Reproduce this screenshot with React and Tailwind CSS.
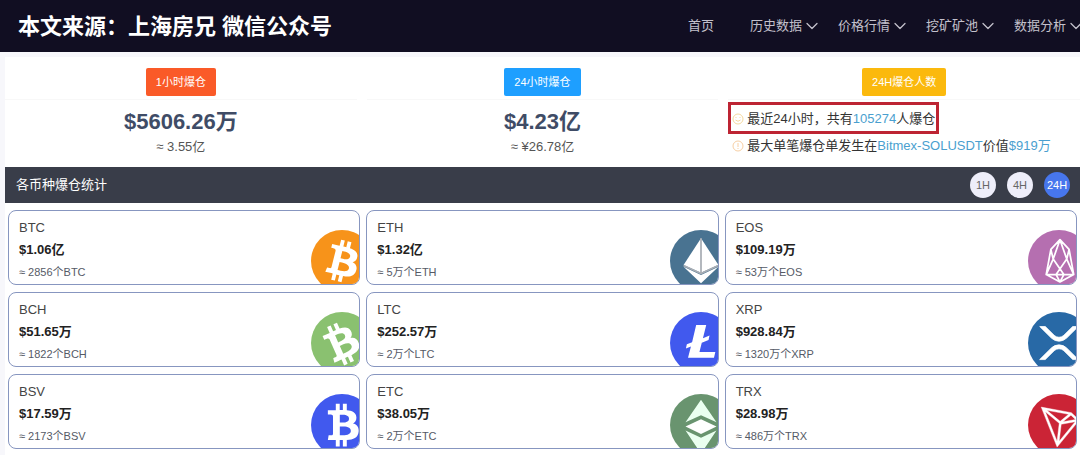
import React, { useState } from "react";
import { FiChevronDown } from "react-icons/fi";

const MENU = ["历史数据", "价格行情", "挖矿矿池", "数据分析"];

const COINS = [
    { name: "BTC", amount: "$1.06亿", count: "≈ 2856个BTC" },
    { name: "ETH", amount: "$1.32亿", count: "≈ 5万个ETH" },
    { name: "EOS", amount: "$109.19万", count: "≈ 53万个EOS" },
    { name: "BCH", amount: "$51.65万", count: "≈ 1822个BCH" },
    { name: "LTC", amount: "$252.57万", count: "≈ 2万个LTC" },
    { name: "XRP", amount: "$928.84万", count: "≈ 1320万个XRP" },
    { name: "BSV", amount: "$17.59万", count: "≈ 2173个BSV" },
    { name: "ETC", amount: "$38.05万", count: "≈ 2万个ETC" },
    { name: "TRX", amount: "$28.98万", count: "≈ 486万个TRX" },
];

const BITCOIN_SIGN =
    "M23.189 14.02c.314-2.096-1.283-3.223-3.465-3.975l.708-2.84-1.728-.43-.69 2.765c-.454-.114-.92-.22-1.385-.326l.695-2.783L15.596 6l-.708 2.839c-.376-.086-.746-.17-1.104-.26l.002-.009-2.384-.595-.46 1.846s1.283.294 1.256.312c.7.175.826.638.805 1.006l-.806 3.235c.048.012.11.03.18.057l-.183-.045-1.13 4.532c-.086.212-.303.531-.793.41.018.025-1.256-.313-1.256-.313l-.858 1.978 2.25.561c.418.105.828.215 1.231.318l-.715 2.872 1.727.43.708-2.84c.472.127.93.245 1.378.357l-.706 2.828 1.728.43.715-2.866c2.948.558 5.164.333 6.097-2.333.752-2.146-.037-3.385-1.588-4.192 1.13-.26 1.98-1.003 2.207-2.538zm-3.95 5.538c-.533 2.147-4.148.986-5.32.695l.95-3.805c1.172.293 4.929.872 4.37 3.11zm.535-5.569c-.487 1.953-3.495.96-4.47.717l.86-3.45c.975.243 4.118.696 3.61 2.733z";

const LOGOS = {
    BTC: {
        color: "#f7931a",
        mark: <path transform="translate(16 16) scale(1.1) translate(-16 -16)" d={BITCOIN_SIGN} />,
    },
    BCH: {
        color: "#8ac170",
        mark: <path transform="translate(16 16) rotate(-38) scale(1.12) translate(-16.5 -16)" d={BITCOIN_SIGN} />,
    },
    BSV: {
        color: "#4159ee",
        mark: <path transform="translate(16 16) rotate(-14) scale(1.14) translate(-16 -16)" d={BITCOIN_SIGN} />,
    },
    ETH: {
        color: "#497391",
        mark: (
            <>
                <path d="M16 4.3 7 18l9 4 9-4z" />
                <path d="m7 19 9 8.5L25 19l-9 4.2z" />
                <path d="M16 4.3V22M7 18.3l9 4.2 9-4.2" fill="none" stroke="#a9aeb5" strokeWidth="0.9" />
            </>
        ),
    },
    LTC: {
        color: "#4159ee",
        mark: <path d="M13.5 6.7h5.2L17 13.5l3.4-1.4-.5 2.3-3.5 1.5-1.2 4.8h8.2l-.7 2.9H9.3l1.5-5.8-2.6 1.1.5-2.2 2.7-1.100z" />,
    },
    ETC: {
        color: "#69946f",
        mark: (
            <>
                <path d="M16 3 8 14.6l8-3.6 8 3.6z" fill="#eafff0" />
                <path d="m16 13-8 3.8 8 3.8 8-3.8z" />
                <path d="m8 18.8 8 12 8-12-8 3.8z" fill="#eafff0" />
            </>
        ),
    },
    EOS: {
        color: "#b56fb0",
        mark: (
            <path
                d="M16.5 5 11.8 10 9.4 23l7.100 3.800L23.600 23 21.200 10zM16.500 5 13 15 18.500 23M16.500 5 20 15 14.500 23M11.800 10 13 15 9.400 23H23.600L20 15 21.200 10M14.500 23 16.500 26.800 18.500 23"
                fill="none"
                stroke="#fff"
                strokeWidth="0.9"
                strokeLinejoin="round"
            />
        ),
    },
    XRP: {
        color: "#2869a6",
        mark: (
            <path
                stroke="#fff"
                strokeWidth="0.4"
                d="M23.07 7.5h2.89l-6.015 5.957a5.621 5.621 0 01-7.89 0L6.035 7.5H8.93l4.57 4.523a3.556 3.556 0 004.996 0L23.07 7.5zM8.895 24.563H6l6.055-5.993a5.621 5.621 0 017.89 0L26 24.562h-2.895L18.5 20a3.556 3.556 0 00-4.996 0l-4.61 4.563z"
            />
        ),
    },
    TRX: {
        color: "#cb2436",
        mark: (
            <path
                transform="translate(16 16) scale(1.08) translate(-16 -15.8)"
                stroke="#fff"
                strokeWidth="0.2"
                d="M21.932 9.913L7.5 7.257l7.595 19.112 10.583-12.894-3.746-3.562zm-.232 1.17l2.208 2.099-6.038 1.093 3.83-3.192zm-5.142 2.973l-6.364-5.278 10.402 1.914-4.038 3.364zm-.453.934l-1.038 8.58L9.472 9.487l6.633 5.502zm.96.455l6.687-1.21-7.67 9.343.983-8.133z"
            />
        ),
    },
};

const CoinLogo = ({ name }) => (
    <svg viewBox="0 0 32 32" fill="#fff" className="absolute top-[19px] -right-[14px] size-[62px]" aria-hidden="true">
        <circle cx="16" cy="16" r="16" fill={LOGOS[name].color} />
        {LOGOS[name].mark}
    </svg>
);

const CoinCard = ({ coin }) => (
    <div className="relative overflow-hidden rounded-lg border border-[#8796c0] bg-white px-[10px] pt-[6px] pb-px leading-[22px]">
        <h3 className="text-[13px] text-[#444]">{coin.name}</h3>
        <p className="text-[13px] font-bold text-[#222]">{coin.amount}</p>
        <p className="text-[11px] text-[#555a66]">{coin.count}</p>
        <CoinLogo name={coin.name} />
    </div>
);

const StatHead = ({ label, color }) => (
    <div className="flex justify-center border-b border-[#f8f8f8] pt-[11px] pb-[3px]">
        <span className={`rounded-xs px-[10px] text-[11px] leading-7 text-white ${color}`}>{label}</span>
    </div>
);

const StatBox = ({ label, color, amount, sub }) => (
    <div>
        <StatHead label={label} color={color} />
        <div className="pt-[6px] text-center">
            <p className="text-[22px] leading-8 font-bold text-[#3f4c66]">{amount}</p>
            <p className="text-[13px] leading-[18px] text-[#555]">{sub}</p>
        </div>
    </div>
);

const SmileIcon = () => (
    <svg viewBox="0 0 12 12" fill="none" stroke="#f5d9a0" className="size-3 shrink-0" aria-hidden="true">
        <circle cx="6" cy="6" r="5" />
        <path d="M4 4v1M8 4v1M3.5 7Q6 9.5 8.5 7" />
    </svg>
);

const TipIcon = () => (
    <svg viewBox="0 0 12 12" fill="none" stroke="#f7cfa4" className="size-3 shrink-0" aria-hidden="true">
        <circle cx="6" cy="6" r="5" />
        <path d="M6 3v4M6 8v1" />
    </svg>
);

const App = () => {
    const [period, setPeriod] = useState("24H");

    return (
        <div className="min-h-screen overflow-hidden bg-[#f7f7fb] font-['Liberation_Sans','Noto_Sans_CJK_SC',sans-serif]">
            <header className="flex h-[52px] items-center justify-between overflow-hidden bg-[#110e22] pl-[18px]">
                <h1 className="text-[22px] font-bold whitespace-nowrap text-white">本文来源：上海房兄 微信公众号</h1>
                <nav className="-mr-[22px] flex shrink-0 text-[13px] leading-5 text-[#c3c1cc]">
                    <a href="#" className="pr-9">首页</a>
                    {MENU.map((item) => (
                        <a key={item} href="#" className="flex items-center pr-4">
                            {item}
                            <FiChevronDown className="size-5" strokeWidth={1.5} />
                        </a>
                    ))}
                </nav>
            </header>

            <main className="mt-[5px] ml-[5px] bg-white pb-[6px]">
                {/* Liquidation totals */}
                <section className="grid grid-cols-3 gap-[10px] pb-[9px]">
                    <StatBox label="1小时爆仓" color="bg-[#fa5a28]" amount="$5606.26万" sub="≈ 3.55亿" />
                    <StatBox label="24小时爆仓" color="bg-[#1e9fff]" amount="$4.23亿" sub="≈ ¥26.78亿" />
                    <div>
                        <StatHead label="24H爆仓人数" color="bg-[#fbb90d]" />
                        <div className="flex flex-col items-start pt-[2px] text-[13px] leading-6 whitespace-nowrap text-[#333]">
                            <p className="flex items-center gap-[3px] border-3 border-[#bd2433] px-px pt-[2px]">
                                <SmileIcon />
                                <span>最近24小时，共有<span className="text-[#4a9fcf]">105274</span>人爆仓</span>
                            </p>
                            <p className="flex items-center gap-[3px] px-1">
                                <TipIcon />
                                <span>最大单笔爆仓单发生在<span className="text-[#4a9fcf]">Bitmex-SOLUSDT</span>价值<span className="text-[#4a9fcf]">$919万</span></span>
                            </p>
                        </div>
                    </div>
                </section>

                {/* Per-coin statistics */}
                <section>
                    <div className="flex h-9 items-center justify-between bg-[#393d49] pr-[10px] pl-[11px]">
                        <h2 className="text-[13px] text-white">各币种爆仓统计</h2>
                        <div className="flex gap-[11px]">
                            {["1H", "4H", "24H"].map((item) => (
                                <button
                                    key={item}
                                    type="button"
                                    onClick={() => setPeriod(item)}
                                    className={`size-[26px] rounded-full text-[11px] ${period === item ? "bg-[#4776ed] text-white" : "bg-[#eeeefa] text-[#666]"}`}
                                >
                                    {item}
                                </button>
                            ))}
                        </div>
                    </div>
                    <div className="grid grid-cols-3 gap-x-[6px] gap-y-[7px] px-[3px] pt-[7px]">
                        {COINS.map((coin) => (
                            <CoinCard key={coin.name} coin={coin} />
                        ))}
                    </div>
                </section>
            </main>
        </div>
    );
};

export default App;
